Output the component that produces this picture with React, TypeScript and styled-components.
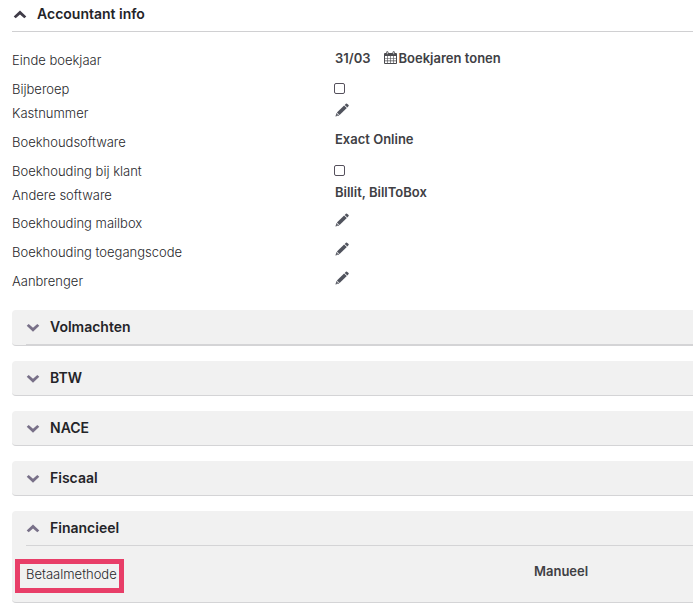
import React, { useState } from 'react';
import styled, { createGlobalStyle } from 'styled-components';

const GlobalStyle = createGlobalStyle`
  *, *::before, *::after { box-sizing: border-box; }
  body {
    margin: 0;
    background: #ffffff;
    color: #404044;
    font-family: Inter, "Liberation Sans", sans-serif;
    font-size: 13px;
    line-height: 20px;
    overflow-x: hidden;
  }
  button, input { font: inherit; color: inherit; }
`;

const Page = styled.main`
  padding: 0 0 10px 12px;
`;

const Heading = styled.h2`
  margin: 0;
  font-size: 14px;
  font-weight: 600;
  line-height: 20px;
`;

const Toggle = styled.button<{ $main?: boolean }>`
  display: flex;
  align-items: center;
  width: 100%;
  gap: 10px;
  padding: ${p => (p.$main ? '4px 0 7px 1px' : '7px 0 7px 14px')};
  border: 0;
  background: none;
  color: #242428;
  text-align: left;
  cursor: pointer;
`;

const MainHeader = styled.header`
  border-bottom: 1px solid #d0d0d2;
`;

const Fields = styled.div`
  display: flex;
  flex-direction: column;
  padding: 18px 0 10px;
`;

const rowHeights = { compact: 24, medium: 28, normal: 29 };

const FieldRow = styled.div<{ $size: keyof typeof rowHeights }>`
  display: grid;
  grid-template-columns: 323fr 358fr;
  align-items: start;
  min-height: ${p => rowHeights[p.$size]}px;
`;

const FieldLabel = styled.label`
  font-weight: 300;
  color: #28282c;
`;

const FieldValue = styled.div`
  display: flex;
  align-items: center;
  gap: 13px;
  font-weight: 600;
  line-height: 14px;
`;

const CalendarButton = styled.button`
  display: flex;
  align-items: center;
  gap: 2px;
  padding: 0;
  border: 0;
  background: none;
  font-weight: 600;
  line-height: 16px;
  cursor: pointer;
`;

const EditButton = styled.button`
  display: flex;
  padding: 0;
  border: 0;
  background: none;
  cursor: pointer;
`;

const Checkbox = styled.input`
  appearance: none;
  width: 11px;
  height: 11px;
  margin: 4px 0 0 -1px;
  border: 1px solid #55505c;
  border-radius: 2px;
  background: #ffffff;
  &:checked { background: #55505c; }
`;

const Panels = styled.div`
  display: flex;
  flex-direction: column;
  gap: 15px;
`;

const Panel = styled.section`
  border-bottom: 1px solid #d4d4d6;
  border-radius: 4px 0 0 4px;
  background: #f1f1f1;
`;

const Divider = styled.div`
  height: 1px;
  margin-left: 14px;
  background: #d4d4d6;
`;

const PanelRow = styled.div`
  display: grid;
  grid-template-columns: 508fr 159fr;
  align-items: start;
  padding: 18px 0;
  margin-left: 14px;
`;

const HighlightedLabel = styled.span`
  position: relative;
  justify-self: start;
  font-weight: 300;
  color: #28282c;
  &::after {
    content: '';
    position: absolute;
    inset: -5px -7px -9px -11px;
    border: 5px solid #e83e68;
  }
`;

const Icon = styled.svg`
  display: block;
  flex: none;
`;

function Chevron({ up, color }: { up?: boolean; color: string }) {
  return (
    <Icon width="14" height="14" viewBox="0 0 14 14" aria-hidden="true">
      <path
        d={up ? 'M.7 9.4 7 3.4l6.3 6-2 1.9L7 7.4l-4.3 3.9z' : 'M.7 5.8 7 11.8l6.3-6-2-1.9L7 7.8 2.7 3.9z'}
        fill={color}
      />
    </Icon>
  );
}

function Pencil() {
  return (
    <Icon width="14" height="14" viewBox="0 0 14 14" fill="#50535d" aria-hidden="true">
      <path d="M.4 13.6 1.5 9.9l2.8 2.7z" />
      <path d="M1.9 9.4 9.1 2.4l2.7 2.6-7.2 7.1z" />
      <path d="m9.7 1.9 1.2-1.2q.6-.5 1.1 0L13.6 2.1q.4.5 0 1l-1.2 1.4z" />
      <path d="m2 11.3.9.9-1.2.4z" fill="#ffffff" />
    </Icon>
  );
}

function Calendar() {
  return (
    <Icon width="13" height="14" viewBox="0 0 13 14" aria-hidden="true">
      <path d="M1 2h11a1 1 0 0 1 1 1v9a1 1 0 0 1-1 1H1a1 1 0 0 1-1-1V3a1 1 0 0 1 1-1z" fill="#4b4b4f" />
      <path
        d="M1 5h2.3v2H1zm2.9 0h2.3v2H3.9zm2.9 0h2.3v2H6.8zm2.9 0H12v2H9.7zM1 7.6h2.3v2H1zm2.9 0h2.3v2H3.9zm2.9 0h2.3v2H6.8zm2.9 0H12v2H9.7zM1 10.2h2.3V12H1zm2.9 0h2.3V12H3.9zm2.9 0h2.3V12H6.8zm2.9 0H12V12H9.7z"
        fill="#ffffff"
      />
      <rect x="2.5" y=".5" width="1.6" height="3" rx=".8" fill="#d8d8da" stroke="#4b4b4f" strokeWidth=".8" />
      <rect x="8.9" y=".5" width="1.6" height="3" rx=".8" fill="#d8d8da" stroke="#4b4b4f" strokeWidth=".8" />
    </Icon>
  );
}

type Field = {
  id: string;
  label: string;
  kind: 'date' | 'check' | 'edit' | 'text';
  value?: string;
  size?: keyof typeof rowHeights;
};

const fields: Field[] = [
  { id: 'einde', label: 'Einde boekjaar', kind: 'date', value: '31/03' },
  { id: 'bijberoep', label: 'Bijberoep', kind: 'check', size: 'compact' },
  { id: 'kast', label: 'Kastnummer', kind: 'edit' },
  { id: 'boeksoft', label: 'Boekhoudsoftware', kind: 'text', value: 'Exact Online' },
  { id: 'klant', label: 'Boekhouding bij klant', kind: 'check', size: 'compact' },
  { id: 'andere', label: 'Andere software', kind: 'text', value: 'Billit, BillToBox', size: 'medium' },
  { id: 'mailbox', label: 'Boekhouding mailbox', kind: 'edit' },
  { id: 'toegang', label: 'Boekhouding toegangscode', kind: 'edit' },
  { id: 'aanbrenger', label: 'Aanbrenger', kind: 'edit' },
];

function Value({ field }: { field: Field }) {
  if (field.kind === 'check') return <Checkbox type="checkbox" id={field.id} />;
  if (field.kind === 'edit') {
    return (
      <FieldValue>
        <EditButton type="button" id={field.id}><Pencil /></EditButton>
      </FieldValue>
    );
  }
  return (
    <FieldValue>
      <span>{field.value}</span>
      {field.kind === 'date' && (
        <CalendarButton type="button" id={field.id}><Calendar />Boekjaren tonen</CalendarButton>
      )}
    </FieldValue>
  );
}

export default function App() {
  const [infoOpen, setInfoOpen] = useState(true);
  const [open, setOpen] = useState('Financieel');
  return (
    <>
      <GlobalStyle />
      <Page>
        <MainHeader>
          <Heading>
            <Toggle $main type="button" aria-expanded={infoOpen} onClick={() => setInfoOpen(!infoOpen)}>
              <Chevron up={infoOpen} color="#403c48" />Accountant info
            </Toggle>
          </Heading>
        </MainHeader>
        {infoOpen && (
          <Fields>
            {fields.map(field => (
              <FieldRow key={field.id} $size={field.size ?? 'normal'}>
                <FieldLabel htmlFor={field.kind === 'text' ? undefined : field.id}>{field.label}</FieldLabel>
                <Value field={field} />
              </FieldRow>
            ))}
          </Fields>
        )}
        <Panels>
          {['Volmachten', 'BTW', 'NACE', 'Fiscaal', 'Financieel'].map(name => (
            <Panel key={name}>
              <Heading>
                <Toggle type="button" aria-expanded={open === name} onClick={() => setOpen(open === name ? '' : name)}>
                  <Chevron up={open === name} color="#787088" />{name}
                </Toggle>
              </Heading>
              {name === 'Volmachten' && <Divider />}
              {name === 'Financieel' && open === name && (
                <>
                  <Divider />
                  <PanelRow>
                    <HighlightedLabel>Betaalmethode</HighlightedLabel>
                    <FieldValue>Manueel</FieldValue>
                  </PanelRow>
                </>
              )}
            </Panel>
          ))}
        </Panels>
      </Page>
    </>
  );
}
